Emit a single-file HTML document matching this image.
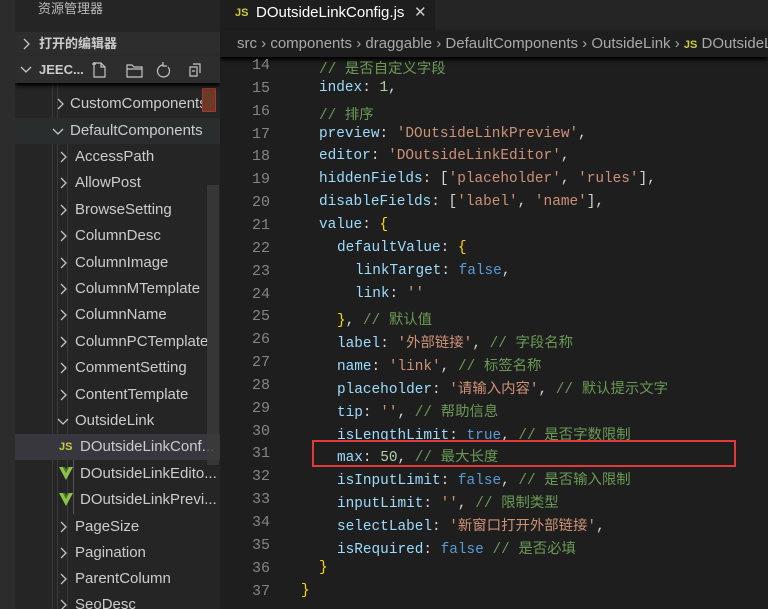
<!DOCTYPE html>
<html style="overflow:hidden"><head><meta charset="utf-8"><style>
html,body{overflow:hidden}
body{margin:0;width:768px;height:609px;overflow:hidden;background:#1e1e1e;position:relative;font-family:"Liberation Sans","Noto Sans CJK SC",sans-serif;}
.act{position:absolute;left:0;top:0;width:15px;height:609px;background:#2c2c2c}
.side{position:absolute;left:15px;top:0;width:205px;height:609px;background:#252526;overflow:hidden}
.row{position:absolute;left:0;width:205px;height:26px;line-height:26px;color:#cccccc;font-size:15px;white-space:nowrap}
.ch{position:absolute;top:7px;fill:none;stroke:#c5c5c5;stroke-width:1.3}
.guide{position:absolute;top:82px;height:527px;width:1px;background:#3a3a3a}
.editor{position:absolute;left:220px;top:0;width:548px;height:609px;background:#1e1e1e;overflow:hidden}
.tabs{position:absolute;left:0;top:0;width:548px;height:30px;background:#252526}
.tab{position:absolute;left:0;top:0;width:215px;height:30px;background:#1e1e1e;color:#fff;font-size:15px;line-height:26px}
.bc{position:absolute;left:0;top:30px;width:548px;height:27px;line-height:27px;color:#a9a9a9;font-size:15px;white-space:nowrap;box-shadow:0 3px 4px #000;overflow:hidden}
.code{position:absolute;left:0;top:57px;width:548px;height:552px;font-family:"Liberation Mono","Noto Sans CJK SC",monospace;font-size:14.4px;}
.ln{position:absolute;width:50px;text-align:right;color:#858585;left:0;font-size:15px}
.l{position:absolute;left:62px;white-space:pre;color:#d4d4d4}
.k{color:#9cdcfe}.s{color:#ce9178}.c{color:#6a9955}.b{color:#569cd6}.n{color:#b5cea8}.y{color:#ffd700}
.js{color:#cbcb41;font-weight:bold;font-size:11px}
</style></head><body>
<div class="act"></div>
<div class="side">
 <div style="position:absolute;left:23px;top:0;color:#bbb;font-size:13px;line-height:18px">资源管理器</div>
 <div style="position:absolute;left:0;top:32px;width:205px;height:24px;background:#2d2d2d;color:#ccc;font-size:13px;font-weight:bold;line-height:24px"><svg class="ch" style="left:8px;top:6px" width="8" height="12"><path d="M1 1l5 5-5 5"/></svg><span style="position:absolute;left:24px">打开的编辑器</span></div>
 <div style="position:absolute;left:0;top:56px;width:205px;height:27px;background:#2d2d2d;color:#ccc;font-size:13px;font-weight:bold;line-height:27px;box-shadow:0 3px 4px #000;z-index:3"><svg class="ch" style="left:5px;top:10px" width="12" height="8"><path d="M1 1l5 5 5-5"/></svg><span style="position:absolute;left:24px">JEEC...</span>
  <svg style="position:absolute;left:76px;top:4px" width="110" height="20" fill="none" stroke="#c5c5c5" stroke-width="1.2"><path d="M3 3h7l4 4v10H3z M10 3v4h4 M1 4h4 M3 2v4"/><path d="M36 5h5l2 2h8v10H36z M36 9h15"/><path d="M72 5a6 6 0 1 0 5 2 M72 2v4h4"/><path d="M102 4h7v9 M99 7h7v9h-7z M101 11h3"/></svg></div>
 <div class="guide" style="left:37px"></div><div class="guide" style="left:42px"></div><div class="guide" style="left:52px;top:144px;height:465px"></div>
 <div class="row" style="top:91px"><svg class="ch" style="left:42px" width="8" height="12"><path d="M1 1l5 5-5 5"/></svg><span style="position:absolute;left:55px">CustomComponents</span></div>
 <div style="position:absolute;left:187px;top:88px;width:12px;height:22px;background:#6b3a26;border:1px solid #a33"></div>
 <div class="row" style="top:118px;background:#2a2d2e"><svg class="ch" style="left:37px;top:10px" width="12" height="8"><path d="M1 1l5 5 5-5"/></svg><span style="position:absolute;left:55px">DefaultComponents</span></div>
 <div class="row" style="top:144px"><svg class="ch" style="left:45px" width="8" height="12"><path d="M1 1l5 5-5 5"/></svg><span style="position:absolute;left:60px">AccessPath</span></div>
 <div class="row" style="top:170px"><svg class="ch" style="left:45px" width="8" height="12"><path d="M1 1l5 5-5 5"/></svg><span style="position:absolute;left:60px">AllowPost</span></div>
 <div class="row" style="top:197px"><svg class="ch" style="left:45px" width="8" height="12"><path d="M1 1l5 5-5 5"/></svg><span style="position:absolute;left:60px">BrowseSetting</span></div>
 <div class="row" style="top:223px"><svg class="ch" style="left:45px" width="8" height="12"><path d="M1 1l5 5-5 5"/></svg><span style="position:absolute;left:60px">ColumnDesc</span></div>
 <div class="row" style="top:250px"><svg class="ch" style="left:45px" width="8" height="12"><path d="M1 1l5 5-5 5"/></svg><span style="position:absolute;left:60px">ColumnImage</span></div>
 <div class="row" style="top:276px"><svg class="ch" style="left:45px" width="8" height="12"><path d="M1 1l5 5-5 5"/></svg><span style="position:absolute;left:60px">ColumnMTemplate</span></div>
 <div class="row" style="top:302px"><svg class="ch" style="left:45px" width="8" height="12"><path d="M1 1l5 5-5 5"/></svg><span style="position:absolute;left:60px">ColumnName</span></div>
 <div class="row" style="top:329px"><svg class="ch" style="left:45px" width="8" height="12"><path d="M1 1l5 5-5 5"/></svg><span style="position:absolute;left:60px">ColumnPCTemplate</span></div>
 <div class="row" style="top:355px"><svg class="ch" style="left:45px" width="8" height="12"><path d="M1 1l5 5-5 5"/></svg><span style="position:absolute;left:60px">CommentSetting</span></div>
 <div class="row" style="top:382px"><svg class="ch" style="left:45px" width="8" height="12"><path d="M1 1l5 5-5 5"/></svg><span style="position:absolute;left:60px">ContentTemplate</span></div>
 <div class="row" style="top:408px"><svg class="ch" style="left:42px;top:10px" width="12" height="8"><path d="M1 1l5 5 5-5"/></svg><span style="position:absolute;left:60px">OutsideLink</span></div>
 <div class="guide" style="left:58px;top:434px;height:80px;background:#555"></div>
 <div class="row" style="top:434px;background:#37373d"><span class="js" style="position:absolute;left:44px">JS</span><span style="position:absolute;left:65px">DOutsideLinkConf...</span></div>
 <div class="row" style="top:461px"><svg style="position:absolute;left:44px;top:6px" width="14" height="13"><path d="M0 0h4l3 6 3-6h4L7 13z" fill="#8dc149"/><path d="M4 0h2l1 3 1-3h2L7 6z" fill="#4d7a2c"/></svg><span style="position:absolute;left:65px">DOutsideLinkEdito...</span></div>
 <div class="row" style="top:487px"><svg style="position:absolute;left:44px;top:6px" width="14" height="13"><path d="M0 0h4l3 6 3-6h4L7 13z" fill="#8dc149"/><path d="M4 0h2l1 3 1-3h2L7 6z" fill="#4d7a2c"/></svg><span style="position:absolute;left:65px">DOutsideLinkPrevi...</span></div>
 <div class="row" style="top:514px"><svg class="ch" style="left:45px" width="8" height="12"><path d="M1 1l5 5-5 5"/></svg><span style="position:absolute;left:60px">PageSize</span></div>
 <div class="row" style="top:540px"><svg class="ch" style="left:45px" width="8" height="12"><path d="M1 1l5 5-5 5"/></svg><span style="position:absolute;left:60px">Pagination</span></div>
 <div class="row" style="top:566px"><svg class="ch" style="left:45px" width="8" height="12"><path d="M1 1l5 5-5 5"/></svg><span style="position:absolute;left:60px">ParentColumn</span></div>
 <div class="row" style="top:592px;height:17px"><svg class="ch" style="left:45px" width="8" height="12"><path d="M1 1l5 5-5 5"/></svg><span style="position:absolute;left:60px">SeoDesc</span></div>
 <div style="position:absolute;left:192px;top:185px;width:12px;height:280px;background:#3b3b3b;opacity:.8"></div>
</div>
<div class="editor">
 <div class="tabs"><div class="tab"><span class="js" style="position:absolute;left:15px">JS</span><span style="position:absolute;left:36px">DOutsideLinkConfig.js</span><span style="position:absolute;left:194px;color:#ccc">✕</span></div></div>
 <div class="bc"><span style="position:absolute;left:17px">src › components › draggable › DefaultComponents › OutsideLink › <span class="js">JS</span> DOutsideLinkConfig.js</span></div>
 <div class="code">
<div class="ln" style="top:0">14</div><div class="l" style="top:0;left:99px"><span class="c">// 是否自定义字段</span></div>
<div class="ln" style="top:22.85px">15</div><div class="l" style="top:22.85px;left:99px"><span class="k">index</span>: <span class="n">1</span>,</div>
<div class="ln" style="top:45.7px">16</div><div class="l" style="top:45.7px;left:99px"><span class="c">// 排序</span></div>
<div class="ln" style="top:68.55px">17</div><div class="l" style="top:68.55px;left:99px"><span class="k">preview</span>: <span class="s">'DOutsideLinkPreview'</span>,</div>
<div class="ln" style="top:91.4px">18</div><div class="l" style="top:91.4px;left:99px"><span class="k">editor</span>: <span class="s">'DOutsideLinkEditor'</span>,</div>
<div class="ln" style="top:114.25px">19</div><div class="l" style="top:114.25px;left:99px"><span class="k">hiddenFields</span>: [<span class="s">'placeholder'</span>, <span class="s">'rules'</span>],</div>
<div class="ln" style="top:137.1px">20</div><div class="l" style="top:137.1px;left:99px"><span class="k">disableFields</span>: [<span class="s">'label'</span>, <span class="s">'name'</span>],</div>
<div class="ln" style="top:159.95px">21</div><div class="l" style="top:159.95px;left:99px"><span class="k">value</span>: <span class="y">{</span></div>
<div class="ln" style="top:182.8px">22</div><div class="l" style="top:182.8px;left:117px"><span class="k">defaultValue</span>: <span class="y">{</span></div>
<div class="ln" style="top:205.65px">23</div><div class="l" style="top:205.65px;left:135px"><span class="k">linkTarget</span>: <span class="b">false</span>,</div>
<div class="ln" style="top:228.5px">24</div><div class="l" style="top:228.5px;left:135px"><span class="k">link</span>: <span class="s">''</span></div>
<div class="ln" style="top:251.35px">25</div><div class="l" style="top:251.35px;left:117px"><span class="y">}</span>, <span class="c">// 默认值</span></div>
<div class="ln" style="top:274.2px">26</div><div class="l" style="top:274.2px;left:117px"><span class="k">label</span>: <span class="s">'外部链接'</span>, <span class="c">// 字段名称</span></div>
<div class="ln" style="top:297.05px">27</div><div class="l" style="top:297.05px;left:117px"><span class="k">name</span>: <span class="s">'link'</span>, <span class="c">// 标签名称</span></div>
<div class="ln" style="top:319.9px">28</div><div class="l" style="top:319.9px;left:117px"><span class="k">placeholder</span>: <span class="s">'请输入内容'</span>, <span class="c">// 默认提示文字</span></div>
<div class="ln" style="top:342.75px">29</div><div class="l" style="top:342.75px;left:117px"><span class="k">tip</span>: <span class="s">''</span>, <span class="c">// 帮助信息</span></div>
<div class="ln" style="top:365.6px">30</div><div class="l" style="top:365.6px;left:117px"><span class="k">isLengthLimit</span>: <span class="b">true</span>, <span class="c">// 是否字数限制</span></div>
<div class="ln" style="top:388.45px">31</div><div class="l" style="top:388.45px;left:117px"><span class="k">max</span>: <span class="n">50</span>, <span class="c">// 最大长度</span></div>
<div class="ln" style="top:411.3px">32</div><div class="l" style="top:411.3px;left:117px"><span class="k">isInputLimit</span>: <span class="b">false</span>, <span class="c">// 是否输入限制</span></div>
<div class="ln" style="top:434.15px">33</div><div class="l" style="top:434.15px;left:117px"><span class="k">inputLimit</span>: <span class="s">''</span>, <span class="c">// 限制类型</span></div>
<div class="ln" style="top:457px">34</div><div class="l" style="top:457px;left:117px"><span class="k">selectLabel</span>: <span class="s">'新窗口打开外部链接'</span>,</div>
<div class="ln" style="top:479.85px">35</div><div class="l" style="top:479.85px;left:117px"><span class="k">isRequired</span>: <span class="b">false</span> <span class="c">// 是否必填</span></div>
<div class="ln" style="top:502.7px">36</div><div class="l" style="top:502.7px;left:99px"><span class="y">}</span></div>
<div class="ln" style="top:525.55px">37</div><div class="l" style="top:525.55px;left:81px"><span class="y">}</span></div>
 </div>
 <div style="position:absolute;left:92px;top:440px;width:420px;height:23px;border:2px solid #e03a3a"></div>
</div>
</body></html>
